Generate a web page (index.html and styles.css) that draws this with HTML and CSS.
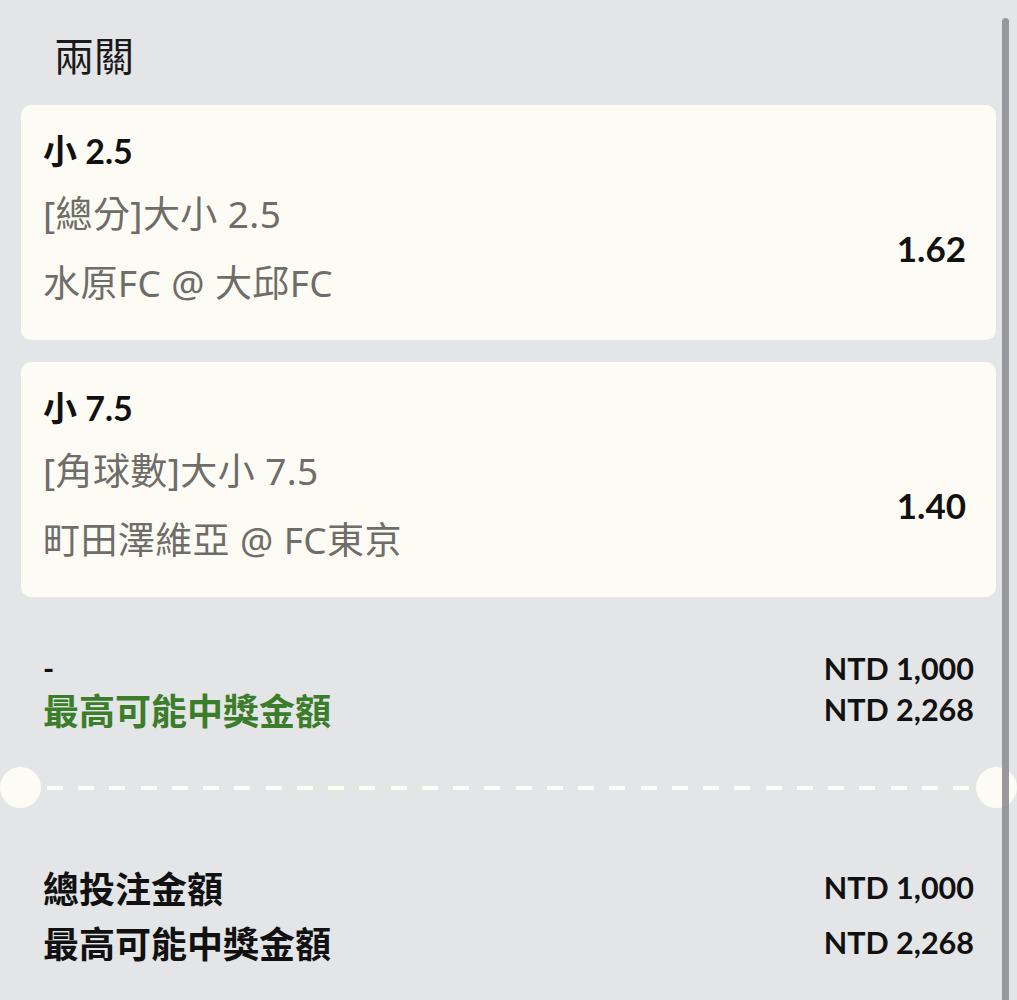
FILE: index.html
```html
<!DOCTYPE html>
<html lang="zh-Hant">
<head>
<meta charset="utf-8">
<title>兩關</title>
<link rel="stylesheet" href="styles.css">
</head>
<body>
<div class="page">
  <h1 class="title">兩關</h1>

  <div class="card">
    <div class="sel">小 2.5</div>
    <div class="sub">[總分]大小 2.5</div>
    <div class="odds">1.62</div>
    <div class="sub">水原FC @ 大邱FC</div>
  </div>

  <div class="card">
    <div class="sel">小 7.5</div>
    <div class="sub">[角球數]大小 7.5</div>
    <div class="odds">1.40</div>
    <div class="sub">町田澤維亞 @ FC東京</div>
  </div>

  <div class="summary">
    <div class="row small">
      <span class="dash">-</span>
      <span class="amount">NTD 1,000</span>
    </div>
    <div class="row small">
      <span class="label green">最高可能中獎金額</span>
      <span class="amount">NTD 2,268</span>
    </div>
  </div>

  <div class="divider">
    <span class="hole"></span>
    <span class="dashes"></span>
    <span class="hole"></span>
  </div>

  <div class="totals">
    <div class="row big">
      <span class="label">總投注金額</span>
      <span class="amount">NTD 1,000</span>
    </div>
    <div class="row big">
      <span class="label">最高可能中獎金額</span>
      <span class="amount">NTD 2,268</span>
    </div>
  </div>
</div>
<div class="scrollbar"></div>
</body>
</html>
```

FILE: styles.css
```css
html, body {
  margin: 0;
  padding: 0;
  background: #e4e5e7;
}

body {
  font-family: "Lato", "Noto Sans CJK TC", sans-serif;
  color: #111111;
  overflow: hidden;
  height: 1000px;
}

.page {
  padding: 0 21px;
}

.title {
  margin: 0;
  padding: 28px 0 21px 33px;
  font-size: 40px;
  line-height: 56px;
  font-weight: 400;
  color: #1a1a1a;
}

.card {
  background: #fdfcf4;
  border-radius: 10px;
  padding: 26px 30px 23px 22px;
  margin-bottom: 22px;
  display: grid;
  grid-template-columns: 1fr auto;
  grid-template-rows: 48px 69px 69px;
}

.sel {
  grid-column: 1 / 3;
  font-size: 34px;
  font-weight: 700;
  line-height: 40px;
  color: #111111;
}

.sub {
  grid-column: 1;
  font-family: "Noto Sans", "Noto Sans CJK TC", sans-serif;
  font-size: 37px;
  line-height: 69px;
  letter-spacing: 0.4px;
  color: #6e6d69;
}

.odds {
  grid-column: 2;
  grid-row: 2 / 4;
  align-self: center;
  font-size: 35px;
  font-weight: 700;
  color: #111111;
}

.summary {
  padding-top: 28px;
}

.row {
  display: flex;
  justify-content: space-between;
  align-items: center;
  padding-left: 22px;
  padding-right: 22px;
}

.row.small {
  height: 41px;
}

.row.big {
  height: 55px;
}

.dash {
  font-size: 30px;
  font-weight: 700;
}

.label {
  font-size: 36px;
  font-weight: 700;
  color: #111111;
}

.label.green {
  color: #3b7d2a;
}

.amount {
  font-size: 30.5px;
  font-weight: 700;
  color: #111111;
}

.divider {
  margin: 38px -21px 0 -21px;
  height: 41px;
  display: flex;
  align-items: center;
}

.hole {
  width: 41px;
  height: 41px;
  border-radius: 50%;
  background: #fdfcf4;
  flex: none;
}

.dashes {
  flex: 1;
  height: 4px;
  margin: 0 5px 0 6px;
  background: repeating-linear-gradient(to right, #fdfcf4 0 16px, transparent 16px 31.25px);
}

.totals {
  padding-top: 51px;
}

.scrollbar {
  position: absolute;
  left: 1002px;
  top: 18px;
  width: 7px;
  height: 990px;
  border-radius: 4px;
  background: #8f8f93;
  opacity: 0.9;
}
```
